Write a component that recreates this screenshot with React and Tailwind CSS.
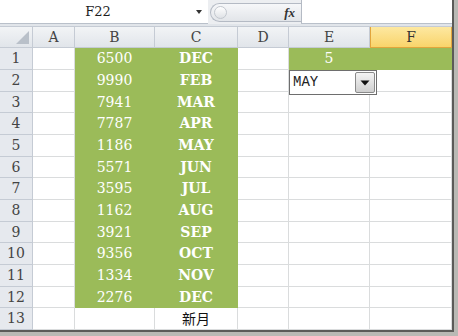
import React from "react";

const colWidths = ["w-[42px]", "w-[80px]", "w-[83px]", "w-[51px]", "w-[81px]", "w-[82px]"];
const colNames = ["A", "B", "C", "D", "E", "F"];

const rows = [
  [6500, "DEC"],
  [9990, "FEB"],
  [7941, "MAR"],
  [7787, "APR"],
  [1186, "MAY"],
  [5571, "JUN"],
  [3595, "JUL"],
  [1162, "AUG"],
  [3921, "SEP"],
  [9356, "OCT"],
  [1334, "NOV"],
  [2276, "DEC"],
];

const serif = { fontFamily: '"DejaVu Serif", "Liberation Serif", serif' };

const Cell = ({ w, green, children, className = "" }) => (
  <div
    className={`${w} h-full shrink-0 border-r border-b flex items-center justify-center ${
      green ? "bg-[#9bbb59] border-[#9bbb59] text-white" : "bg-white border-[#dadcdd]"
    } ${className}`}
  >
    {children}
  </div>
);

const Row = ({ n, h, children }) => (
  <div className={`flex ${h}`}>
    <div
      className="w-[33px] shrink-0 h-full bg-[#e6e9ee] border-r border-b border-[#c5cbd4] flex items-center justify-center text-[14px] text-[#444]"
      style={serif}
    >
      {n}
    </div>
    {children}
  </div>
);

export default function App() {
  return (
    <div className="w-[458px] h-[336px] bg-[#b9b9b4] overflow-hidden">
      <div className="w-[454px] h-[332px] bg-white border-r-2 border-b-2 border-[#5b5b58] flex flex-col">
        {/* formula bar */}
        <div className="h-[24px] flex border-b border-[#b9c0ca] bg-white">
          <div className="w-[208px] flex items-center">
            <div className="flex-1 text-center text-[13px] text-[#1e1e1e] pl-[3px]" style={serif}>
              F22
            </div>
            <svg width="14" height="10" viewBox="0 0 14 10" className="mr-[1px]">
              <path d="M3 3 L9 3 L6 7 Z" fill="#333" />
            </svg>
          </div>
          <div className="w-[93px] h-[24px] bg-[#eceef1] flex items-center pt-[1px]">
            <div className="ml-[2px] w-[91px] h-[19px] rounded-l-full border border-r-0 border-[#b4bac4] bg-gradient-to-b from-[#f6f7f9] to-[#e2e5e9] flex items-center">
              <div className="ml-[3px] w-[13px] h-[13px] rounded-full border border-[#c2c7ce] bg-gradient-to-b from-white to-[#dfe2e6]" />
              <span
                className="ml-auto mr-[6px] text-[13px] italic font-bold text-[#333]"
                style={{ fontFamily: '"Liberation Serif", serif' }}
              >
                fx
              </span>
            </div>
          </div>
          <div className="flex-1 bg-white border-l border-[#b4bac4]" />
        </div>
        <div className="h-[3px] bg-[#e1e5ea] border-b border-[#c5cbd4]" />

        {/* column headers */}
        <div className="flex h-[21px]">
          <div className="w-[33px] shrink-0 h-full bg-gradient-to-b from-[#f2f4f6] to-[#e1e5ea] border-r border-b border-[#c5cbd4] flex items-end justify-end p-[3px]">
            <svg width="13" height="13" viewBox="0 0 13 13">
              <path d="M13 0 L13 13 L0 13 Z" fill="#b9c0c9" />
            </svg>
          </div>
          {colNames.map((c, i) => (
            <div
              key={c}
              className={`${colWidths[i]} shrink-0 h-full border-r border-b flex items-center justify-center text-[14px] ${
                c === "F"
                  ? "bg-gradient-to-b from-[#fde8a0] to-[#f9d46a] border-[#e2a53c] border-l text-[#333]"
                  : "bg-gradient-to-b from-[#f2f4f6] to-[#e1e5ea] border-[#c5cbd4] text-[#444]"
              }`}
              style={serif}
            >
              {c}
            </div>
          ))}
        </div>

        {/* data rows */}
        {rows.map(([num, mon], i) => {
          const n = i + 1;
          const h = n % 3 === 0 ? "h-[21px]" : "h-[22px]";
          return (
            <Row key={n} n={n} h={h}>
              <Cell w={colWidths[0]} />
              <Cell w={colWidths[1]} green className="text-[14px]">
                <span style={serif}>{num}</span>
              </Cell>
              <Cell w={colWidths[2]} green className="text-[14px] font-bold">
                <span style={serif}>{mon}</span>
              </Cell>
              <Cell w={colWidths[3]} />
              {n === 1 ? (
                <>
                  <Cell w={colWidths[4]} green className="text-[14px]">
                    <span style={serif}>5</span>
                  </Cell>
                  <Cell w={colWidths[5]} green />
                </>
              ) : n === 2 ? (
                <>
                  <div className={`${colWidths[4]} shrink-0 h-full border-r border-b border-[#dadcdd] bg-white relative`}>
                    <div className="absolute left-0 top-0 w-[88px] h-[25px] z-10 bg-white border border-[#6e6e6e] flex items-center">
                      <span
                        className="ml-[3px] text-[14px] text-[#222]"
                        style={{ fontFamily: '"Liberation Mono", "Courier New", monospace' }}
                      >
                        MAY
                      </span>
                      <div className="ml-auto mr-[1px] w-[20px] h-[21px] rounded-[2px] border border-[#8a8a8a] bg-gradient-to-b from-[#f4f4f4] to-[#cfcfcf] flex items-center justify-center">
                        <svg width="10" height="6" viewBox="0 0 10 6">
                          <path d="M0.5 0.5 L9.5 0.5 L5 5.5 Z" fill="#111" />
                        </svg>
                      </div>
                    </div>
                  </div>
                  <Cell w={colWidths[5]} />
                </>
              ) : (
                <>
                  <Cell w={colWidths[4]} />
                  <Cell w={colWidths[5]} />
                </>
              )}
            </Row>
          );
        })}
        <Row n={13} h="h-[22px]">
          <Cell w={colWidths[0]} />
          <Cell w={colWidths[1]} />
          <Cell w={colWidths[2]} className="text-[14px] text-[#111]">
            <span style={{ fontFamily: '"Noto Sans CJK TC", "Noto Sans CJK SC", sans-serif' }}>新月</span>
          </Cell>
          <Cell w={colWidths[3]} />
          <Cell w={colWidths[4]} />
          <Cell w={colWidths[5]} />
        </Row>
      </div>
    </div>
  );
}
